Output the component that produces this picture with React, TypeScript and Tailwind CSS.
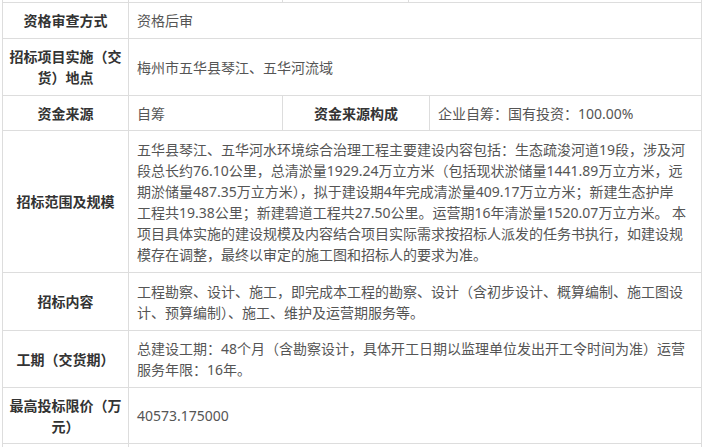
import type { ReactNode } from "react";

const font = "font-['Noto_Sans','Noto_Sans_CJK_SC',sans-serif]";

function Label({ children }: { children?: ReactNode }) {
  return (
    <div className="w-[126px] shrink-0 border-r border-[#ddd] px-[6px] py-[7px] flex items-center justify-center text-center font-bold text-[#333]">
      <span>{children}</span>
    </div>
  );
}

function Value({ children, className = "" }: { children?: ReactNode; className?: string }) {
  return (
    <div className={`px-2 py-[7px] flex items-center text-[#555] ${className}`}>
      <span>{children}</span>
    </div>
  );
}

function Row({ children, h }: { children: ReactNode; h: string }) {
  return <div className={`flex border-t border-[#ddd] ${h}`}>{children}</div>;
}

export default function App() {
  return (
    <div className={`w-[705px] h-[447px] overflow-hidden bg-white pl-[2px] text-[14px] leading-[21px] ${font}`}>
      <div className="w-[700px] -mt-[34px] border-x border-[#ddd]">
        {/* 잘린 윗줄 */}
        <Row h="h-[36px]">
          <Label />
          <Value className="w-[154px] shrink-0 border-r border-[#ddd]" />
          <Label />
          <Value className="flex-1" />
        </Row>

        <Row h="h-[36px]">
          <Label>资格审查方式</Label>
          <Value className="flex-1">资格后审</Value>
        </Row>

        <Row h="h-[57px]">
          <Label>招标项目实施（交货）地点</Label>
          <Value className="flex-1">梅州市五华县琴江、五华河流域</Value>
        </Row>

        <Row h="h-[35px]">
          <Label>资金来源</Label>
          <Value className="w-[154px] shrink-0 border-r border-[#ddd]">自筹</Value>
          <div className="w-[147px] shrink-0 border-r border-[#ddd] flex items-center justify-center font-bold text-[#333]">
            资金来源构成
          </div>
          <Value className="flex-1">企业自筹：国有投资：100.00%</Value>
        </Row>

        <Row h="h-[142px]">
          <Label>招标范围及规模</Label>
          <Value className="flex-1">
            五华县琴江、五华河水环境综合治理工程主要建设内容包括：生态疏浚河道19段，涉及河
            <br />
            段总长约76.10公里，总清淤量1929.24万立方米（包括现状淤储量1441.89万立方米，远
            <br />
            期淤储量487.35万立方米），拟于建设期4年完成清淤量409.17万立方米；新建生态护岸
            <br />
            工程共19.38公里；新建碧道工程共27.50公里。运营期16年清淤量1520.07万立方米。 本
            <br />
            项目具体实施的建设规模及内容结合项目实际需求按招标人派发的任务书执行，如建设规
            <br />
            模存在调整，最终以审定的施工图和招标人的要求为准。
          </Value>
        </Row>

        <Row h="h-[58px]">
          <Label>招标内容</Label>
          <Value className="flex-1">
            工程勘察、设计、施工，即完成本工程的勘察、设计（含初步设计、概算编制、施工图设
            <br />
            计、预算编制）、施工、维护及运营期服务等。
          </Value>
        </Row>

        <Row h="h-[57px]">
          <Label>工期（交货期）</Label>
          <Value className="flex-1">
            总建设工期：48个月（含勘察设计，具体开工日期以监理单位发出开工令时间为准）运营
            <br />
            服务年限：16年。
          </Value>
        </Row>

        <Row h="h-[56px]">
          <Label>最高投标限价（万元）</Label>
          <Value className="flex-1">40573.175000</Value>
        </Row>

        {/* 잘린 아랫줄 */}
        <Row h="h-[40px]">
          <Label />
          <Value className="flex-1" />
        </Row>
      </div>
    </div>
  );
}
